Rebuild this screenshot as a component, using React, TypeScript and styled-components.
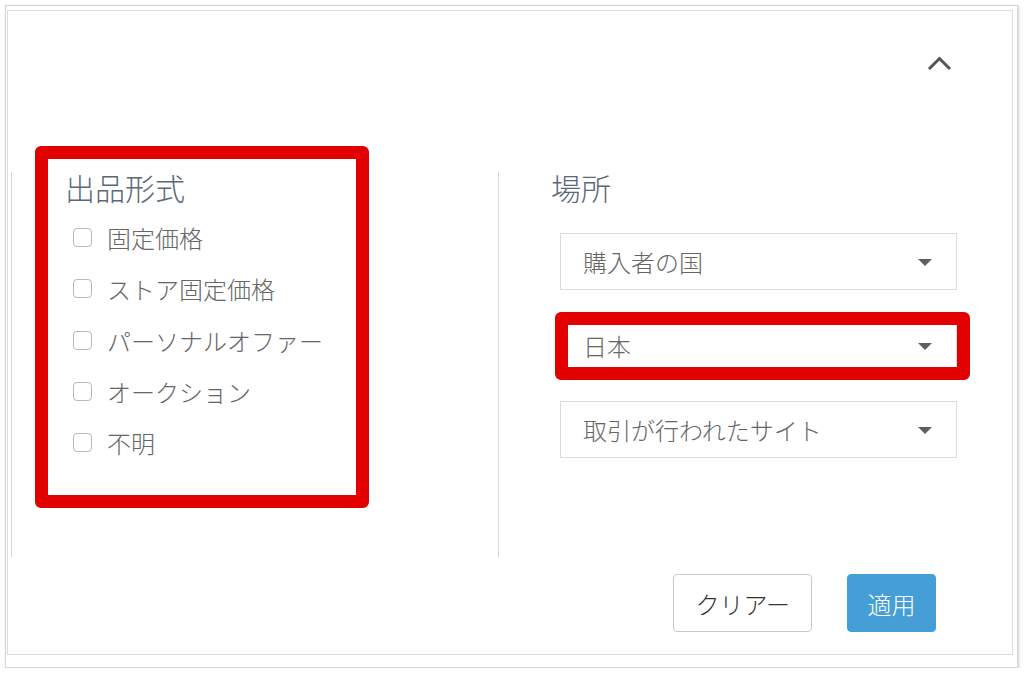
import styled, { createGlobalStyle } from 'styled-components'

const GlobalStyle = createGlobalStyle`
  html, body {
    margin: 0;
    padding: 0;
    background: #ffffff;
  }
  body {
    font-family: "Noto Sans CJK JP", "Noto Sans", sans-serif;
  }
`

const Frame = styled.div`
  box-sizing: border-box;
  width: 1013px;
  height: 663px;
  margin: 5px 0 0 5px;
  border: 1px solid #d4d4d4;
  box-shadow: 1px 1px 3px rgba(0, 0, 0, 0.18);
  padding: 4px 4px 12px 1px;
`

const Panel = styled.div`
  box-sizing: border-box;
  height: 100%;
  border: 1px solid #dcdcdc;
  display: flex;
  flex-direction: column;
`

const Header = styled.div`
  height: 161px;
  display: flex;
  justify-content: flex-end;
  align-items: flex-start;
  padding: 45px 60px 0 0;
  box-sizing: border-box;
  color: #555;
`

const Columns = styled.div`
  display: flex;
  height: 385px;
  padding-left: 3px;
`

const Column = styled.div<{ $width: number }>`
  position: relative;
  box-sizing: border-box;
  width: ${(p) => p.$width}px;
  border-left: 1px solid #d6d6d6;
`

const Title = styled.h2<{ $indent: number }>`
  margin: 0;
  padding-left: ${(p) => p.$indent}px;
  font-size: 30px;
  font-weight: 300;
  line-height: 30px;
  color: #5a6877;
`

const CheckList = styled.ul`
  list-style: none;
  margin: 10px 0 0;
  padding: 0 0 0 61px;
`

const CheckRow = styled.li`
  display: flex;
  align-items: center;
  height: 51.25px;
  gap: 15px;
  font-size: 24px;
  font-weight: 300;
  color: #666;
`

const Box = styled.span`
  box-sizing: border-box;
  width: 19px;
  height: 19px;
  border: 1px solid #b8b8b8;
  border-radius: 4px;
  background: #fff;
  flex: none;
`

const Selects = styled.div`
  display: flex;
  flex-direction: column;
  gap: 27px;
  margin: 31px 0 0 61px;
  width: 397px;
`

const Slot = styled.div`
  position: relative;
`

const Select = styled.div`
  box-sizing: border-box;
  height: 57px;
  border: 1px solid #dcdcdc;
  display: flex;
  align-items: center;
  justify-content: space-between;
  padding: 0 24px 0 22px;
  font-size: 24px;
  font-weight: 300;
  color: #666;
`

const Caret = styled.span`
  width: 0;
  height: 0;
  border-left: 7px solid transparent;
  border-right: 7px solid transparent;
  border-top: 7px solid #5f5f5f;
  margin-top: 2px;
`

const Mark = styled.div<{ $inset: string }>`
  position: absolute;
  inset: ${(p) => p.$inset};
  border: 13px solid #e30000;
  border-radius: 6px;
  pointer-events: none;
`

const Footer = styled.div`
  display: flex;
  justify-content: flex-end;
  gap: 35px;
  margin-top: 17px;
  padding-right: 76px;
`

const Button = styled.button<{ $primary?: boolean }>`
  box-sizing: border-box;
  height: 58px;
  padding: 0 ${(p) => (p.$primary ? '19.5px' : '21px')};
  border-radius: 4px;
  font-family: inherit;
  font-size: 24px;
  font-weight: 300;
  border: 1px solid ${(p) => (p.$primary ? '#459fd6' : '#c8c8c8')};
  background: ${(p) => (p.$primary ? '#459fd6' : '#fff')};
  color: ${(p) => (p.$primary ? '#fff' : '#333')};
`

const ChevronUp = () => (
  <svg width="25" height="15" viewBox="0 0 25 15" fill="none">
    <path d="M2 13 L12.5 2.5 L23 13" stroke="currentColor" strokeWidth="3" />
  </svg>
)

const formats = ['固定価格', 'ストア固定価格', 'パーソナルオファー', 'オークション', '不明']

export default function App() {
  return (
    <>
      <GlobalStyle />
      <Frame>
        <Panel>
          <Header>
            <ChevronUp />
          </Header>
          <Columns>
            <Column $width={487}>
              <Title $indent={53}>出品形式</Title>
              <CheckList>
                {formats.map((f) => (
                  <CheckRow key={f}>
                    <Box />
                    {f}
                  </CheckRow>
                ))}
              </CheckList>
              <Mark $inset="-26px auto auto 23px" style={{ width: 334, height: 362, boxSizing: 'border-box' }} />
            </Column>
            <Column $width={500}>
              <Title $indent={52}>場所</Title>
              <Selects>
                <Select>
                  購入者の国
                  <Caret />
                </Select>
                <Slot>
                  <Select>
                    日本
                    <Caret />
                  </Select>
                  <Mark $inset="-5px -13px -6px -5px" />
                </Slot>
                <Select>
                  取引が行われたサイト
                  <Caret />
                </Select>
              </Selects>
            </Column>
          </Columns>
          <Footer>
            <Button>クリアー</Button>
            <Button $primary>適用</Button>
          </Footer>
        </Panel>
      </Frame>
    </>
  )
}
